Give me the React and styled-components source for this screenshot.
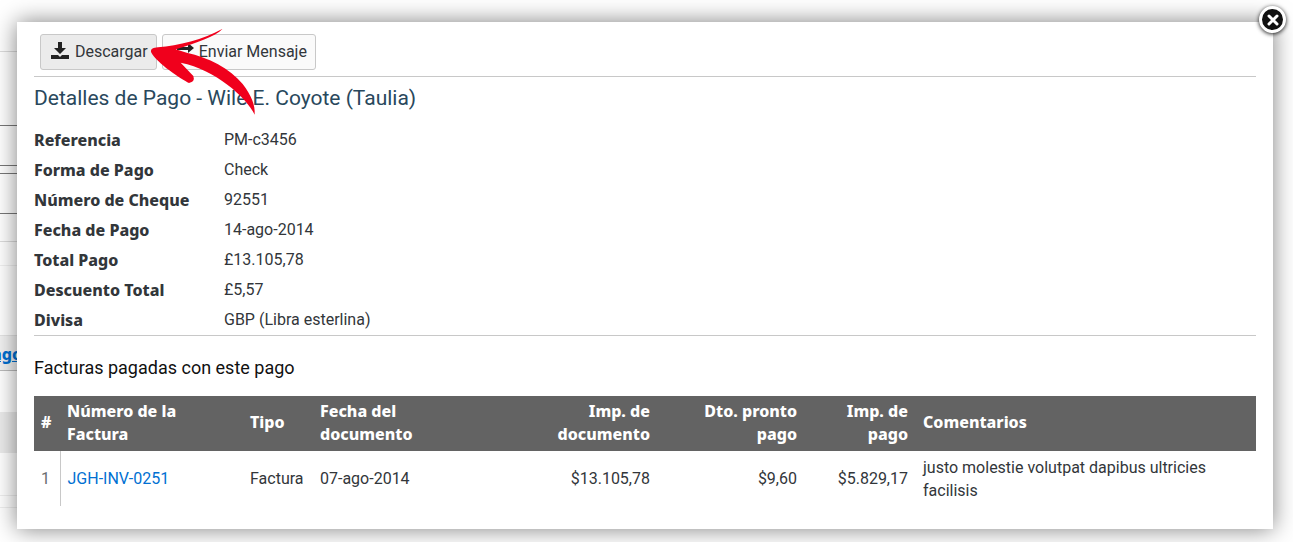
import React from 'react'
import styled, { createGlobalStyle } from 'styled-components';

const GlobalStyle = createGlobalStyle`
  * {
    box-sizing: border-box;
  }

  body {
    margin: 0;
    background-color: white;
    color: #32363a;
    font-family: Roboto, "Liberation Sans", sans-serif;
    font-size: 16px;
    line-height: 23px;
    overflow: hidden;
  }
`;

const heavy = '"Noto Sans", "Open Sans", sans-serif';

const Screen = styled.div`
  display: grid;
  grid-template-columns: minmax(0, 1fr);
  min-height: 100vh;
`;

const Underlay = styled.div`
  grid-area: 1 / 1;
  width: 50%;
`;

const Band = styled.div`
  height: ${props => props.$size}px;
  padding-top: 7px;
  background-color: ${props => props.$fill || 'transparent'};
  border-bottom: 1px solid ${props => props.$line || 'transparent'};
`;

const UnderlayLink = styled.a`
  margin-left: -8px;
  color: #0070d2;
  font-family: ${heavy};
  font-weight: 800;
`;

const Modal = styled.div`
  grid-area: 1 / 1;
  position: relative;
  align-self: start;
  margin: 22px 20px 0 17px;
  padding: 12px 17px 23px;
  background-color: white;
  box-shadow: 0 0 22px rgba(0, 0, 0, 0.5);
`;

const CloseButton = styled.button`
  position: absolute;
  top: -16px;
  right: -13px;
  width: 27px;
  height: 27px;
  padding: 0;
  display: flex;
  align-items: center;
  justify-content: center;
  background-color: #111;
  border: 3px solid white;
  border-radius: 50%;
  box-shadow: 0 1px 4px rgba(0, 0, 0, 0.9);
  cursor: pointer;
`;

const Toolbar = styled.div`
  display: flex;
  gap: 5px;
  padding: 0 6px 6px;
  border-bottom: 1px solid #c8c8c8;
`;

const ToolButton = styled.button`
  display: flex;
  align-items: center;
  gap: 5px;
  height: 36px;
  padding: 0 8px 2px 9px;
  background-color: ${props => props.$active ? '#ebebeb' : '#fafafa'};
  border: 1px solid #c8c8c8;
  border-radius: 3px;
  color: #32363a;
  font-family: inherit;
  font-size: 16px;
  cursor: pointer;
`;

const Arrow = styled.svg`
  position: absolute;
  top: -2px;
  left: 123px;
  width: 130px;
  height: 100px;
  pointer-events: none;
`;

const Title = styled.h1`
  margin: 0;
  padding: 7px 0 13px;
  color: #29485c;
  font-size: 21px;
  font-weight: 400;
  line-height: 28px;
`;

const Details = styled.dl`
  display: grid;
  grid-template-columns: 190px 1fr;
  margin: 0;
  line-height: 30px;
  border-bottom: 1px solid #c8c8c8;
`;

const Term = styled.dt`
  font-family: ${heavy};
  font-weight: 800;
`;

const Value = styled.dd`
  margin: 0;
`;

const Subtitle = styled.h2`
  margin: 0;
  padding: 20px 0 16px;
  color: #111;
  font-size: 18px;
  font-weight: 400;
  line-height: 24px;
`;

const Table = styled.table`
  width: 100%;
  table-layout: fixed;
  border-collapse: collapse;
`;

const Col = styled.col`
  width: ${props => props.$size ? `${props.$size}px` : 'auto'};
`;

const HeadCell = styled.th`
  height: 55px;
  padding: 3px 8px 5px 7px;
  background-color: #636363;
  color: white;
  font-family: ${heavy};
  font-weight: 800;
  text-align: ${props => props.$right ? 'right' : 'left'};
`;

const Cell = styled.td`
  height: 55px;
  padding: 4px 8px 4px 7px;
  text-align: ${props => props.$right ? 'right' : 'left'};
`;

const IndexCell = styled(Cell)`
  color: #6a6d70;
  border-right: 1px solid #c8c8c8;
`;

const InvoiceLink = styled.a`
  color: #0070d2;
  text-decoration: none;
`;

const bands = [
  { size: 52, line: '#dcdcdc' },
  { size: 74, line: '#777' },
  { size: 40, line: '#777' },
  { size: 8, line: '#777' },
  { size: 40, line: '#777' },
  { size: 28, line: '#dcdcdc' },
  { size: 24, line: '#f0f0f0' },
  { size: 70, line: '#e4e4e4' },
  { size: 35, line: '#bbb', fill: '#f2f2f2', link: 'ago' },
  { size: 41 },
  { size: 41, fill: '#ebebeb' },
  { size: 43, line: '#eee' },
  { size: 12, line: '#eee' },
];

const details = [
  ['Referencia', 'PM-c3456'],
  ['Forma de Pago', 'Check'],
  ['Número de Cheque', '92551'],
  ['Fecha de Pago', '14-ago-2014'],
  ['Total Pago', '£13.105,78'],
  ['Descuento Total', '£5,57'],
  ['Divisa', 'GBP (Libra esterlina)'],
];

const columns = [
  { size: 26, lines: ['#'] },
  { size: 183, lines: ['Número de la', 'Factura'] },
  { size: 70, lines: ['Tipo'] },
  { size: 170, lines: ['Fecha del', 'documento'] },
  { size: 175, lines: ['Imp. de', 'documento'], right: true },
  { size: 147, lines: ['Dto. pronto', 'pago'], right: true },
  { size: 111, lines: ['Imp. de', 'pago'], right: true },
  { lines: ['Comentarios'] },
];

const DownloadIcon = () => (
  <svg width="20" height="18" viewBox="0 0 20 18" fill="#222" aria-hidden="true">
    <path d="M8 0h4v6h4l-6 6-6-6h4z" />
    <path d="M1 13h7l2 2 2-2h7v4H1z" />
  </svg>
);

const MessageIcon = () => (
  <svg width="22" height="18" viewBox="0 0 22 18" fill="#222" aria-hidden="true">
    <path d="M5 5h11V1l6 5-6 5V8H5z" />
    <path d="M17 15H7v3l-6-5 6-4v3h10z" />
  </svg>
);

const CloseIcon = () => (
  <svg width="12" height="12" viewBox="0 0 12 12" stroke="white" strokeWidth="3" strokeLinecap="round" aria-hidden="true">
    <path d="M2 2l8 8M10 2l-8 8" />
  </svg>
);

const App = () => {
  return (
    <Screen>
      <GlobalStyle />
      <Underlay>
        {bands.map((band, i) => (
          <Band key={i} $size={band.size} $line={band.line} $fill={band.fill}>
            {band.link && <UnderlayLink href="#pago">{band.link}</UnderlayLink>}
          </Band>
        ))}
      </Underlay>
      <Modal role="dialog" aria-labelledby="title">
        <Toolbar>
          <ToolButton type="button" $active><DownloadIcon />Descargar</ToolButton>
          <ToolButton type="button"><MessageIcon />Enviar Mensaje</ToolButton>
        </Toolbar>
        <Title id="title">Detalles de Pago - Wile E. Coyote (Taulia)</Title>
        <Details>
          {details.map(([term, value]) => (
            <React.Fragment key={term}>
              <Term>{term}</Term>
              <Value>{value}</Value>
            </React.Fragment>
          ))}
        </Details>
        <Subtitle>Facturas pagadas con este pago</Subtitle>
        <Table>
          <colgroup>
            {columns.map((col, i) => <Col key={i} $size={col.size} />)}
          </colgroup>
          <thead>
            <tr>
              {columns.map((col, i) => (
                <HeadCell key={i} $right={col.right}>
                  {col.lines[0]}
                  {col.lines[1] && <><br />{col.lines[1]}</>}
                </HeadCell>
              ))}
            </tr>
          </thead>
          <tbody>
            <tr>
              <IndexCell>1</IndexCell>
              <Cell><InvoiceLink href="#invoice">JGH-INV-0251</InvoiceLink></Cell>
              <Cell>Factura</Cell>
              <Cell>07-ago-2014</Cell>
              <Cell $right>$13.105,78</Cell>
              <Cell $right>$9,60</Cell>
              <Cell $right>$5.829,17</Cell>
              <Cell>justo molestie volutpat dapibus ultricies facilisis</Cell>
            </tr>
          </tbody>
        </Table>
        <Arrow viewBox="0 0 390 300" aria-hidden="true">
          <path
            fill="#f0001c"
            d="M33 96C32 86 40 83 54 82C115 77 190 58 248 26C225 50 170 68 107 88L140 98C205 112 270 145 308 192C335 228 346 255 344 284C332 258 300 222 262 194C225 165 175 138 122 128L160 168Q166 185 147 189C125 178 50 130 33 96z"
          />
        </Arrow>
        <CloseButton type="button" aria-label="Cerrar"><CloseIcon /></CloseButton>
      </Modal>
    </Screen>
  )
}

export default App
